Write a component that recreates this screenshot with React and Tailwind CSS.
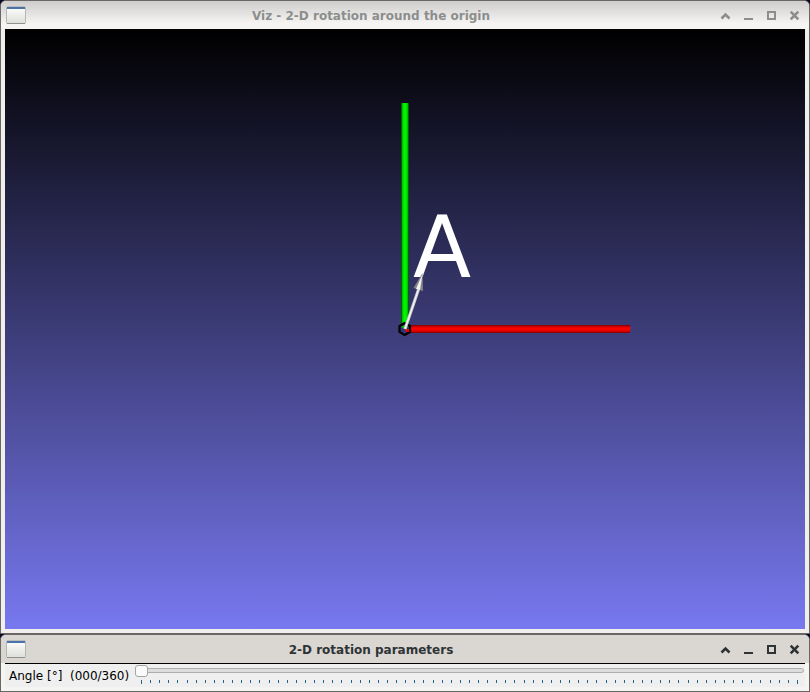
import React, { useState } from 'react';

function WindowIcon() {
  return (
    <svg className="h-5 w-5 shrink-0" viewBox="0 0 20 20" aria-hidden="true">
      <defs>
        <linearGradient id="pane" x1="0" y1="0" x2="0" y2="1">
          <stop offset="0" stopColor="#ffffff" />
          <stop offset="1" stopColor="#dcdfd9" />
        </linearGradient>
      </defs>
      <rect x="0.5" y="1.5" width="19" height="17" rx="1" fill="url(#pane)" stroke="#b4b7b2" />
      <rect x="1" y="1" width="18" height="1" fill="#b9bdc0" />
      <rect x="1" y="2" width="18" height="2" fill="#4c73a8" />
      <rect x="1" y="18" width="18" height="1" fill="#8d908c" />
    </svg>
  );
}

const glyphs = {
  Shade: <path d="M1.5 9.5 L5.5 5.5 L9.5 9.5" strokeWidth="2.6" />,
  Minimize: <path d="M1 10 H10" />,
  Maximize: <rect x="2" y="3" width="7" height="7" />,
  Close: <path d="M1.7 2.7 L9.3 10.3 M9.3 2.7 L1.7 10.3" strokeWidth="2.6" />,
};

function TitleBar({ title, active }) {
  return (
    <header
      className={
        'flex h-7 items-center pr-[9px] pl-[5px] ' +
        (active ? 'bg-[#dad6d2] text-[#2e3436]' : 'bg-linear-to-b from-[#cfcdcb] to-[#f5f4f2] to-80% text-[#8b8e8d]')
      }
    >
      <WindowIcon />
      <h1 className="flex-1 pt-0.5 pr-1 text-center text-xs font-bold">{title}</h1>
      <div className="flex gap-3">
        {Object.entries(glyphs).map(([name, shape]) => (
          <button key={name} type="button" aria-label={name} className="h-3 w-[11px]">
            <svg className="h-3 w-[11px]" viewBox="0 0 11 12" fill="none" stroke="currentColor" strokeWidth="2">
              {shape}
            </svg>
          </button>
        ))}
      </div>
    </header>
  );
}

function Scene() {
  return (
    <svg className="block w-full" viewBox="0 0 800 600" role="img" aria-label="Vector A in the coordinate frame">
      <defs>
        <linearGradient id="sky" x1="0" y1="0" x2="0" y2="1">
          <stop offset="0" stopColor="#000000" />
          <stop offset="1" stopColor="#7878f0" />
        </linearGradient>
        <linearGradient id="yAxis" x1="0" y1="0" x2="1" y2="0">
          <stop offset="0" stopColor="#003800" />
          <stop offset="0.22" stopColor="#00d800" />
          <stop offset="0.5" stopColor="#00ff00" />
          <stop offset="0.78" stopColor="#00d800" />
          <stop offset="1" stopColor="#003800" />
        </linearGradient>
        <linearGradient id="xAxis" x1="0" y1="0" x2="0" y2="1">
          <stop offset="0" stopColor="#780000" />
          <stop offset="0.25" stopColor="#e00000" />
          <stop offset="0.5" stopColor="#ff0000" />
          <stop offset="0.75" stopColor="#e00000" />
          <stop offset="1" stopColor="#780000" />
        </linearGradient>
      </defs>
      <rect width="800" height="600" fill="url(#sky)" />
      <rect x="396" y="74" width="8" height="222" rx="1" fill="url(#yAxis)" />
      <rect x="404" y="296" width="221" height="8" fill="url(#xAxis)" />
      <rect x="625" y="298" width="1" height="3" fill="#a02040" />
      <path d="M399.5 294 L405 297 V303 L399.5 306 L394.5 303 V297 Z" fill="#34347a" stroke="#000" strokeWidth="2.2" />
      <path d="M396 298 L400 296 L403 298 L400 300 Z" fill="#0c0" />
      <path d="M400 300 H404 V303 H401 Z" fill="#e00" />
      <text x="408" y="248" fill="#fff" fontSize="85" fontFamily="DejaVu Sans, sans-serif">
        A
      </text>
      <path d="M400 300 L414 259" stroke="#ccc" strokeWidth="3" />
      <path d="M400 300 L414 259" stroke="#fff" strokeWidth="1" />
      <path d="M417.5 244 L408.5 259 L418 262 Z" fill="#858585" />
      <path d="M417.5 245 L411 260 L415 261 Z" fill="#f2f2f2" />
    </svg>
  );
}

const ticks = Array.from({ length: 73 }, (_, i) => i * 5);

export default function App() {
  const [angle, setAngle] = useState(0);
  return (
    <main className="min-h-screen bg-[#0a0828] font-['DejaVu_Sans',sans-serif]">
      <section className="overflow-hidden rounded-t-md border border-[#696664] bg-[#f1efed]">
        <TitleBar title="Viz - 2-D rotation around the origin" />
        <div className="px-1 pb-1">
          <Scene />
        </div>
      </section>
      <section className="overflow-hidden rounded-t-md border border-[#696664] bg-[#f5f4f3]">
        <TitleBar title="2-D rotation parameters" active />
        <div className="px-1 pb-1">
          <div className="flex h-6 border-t border-black bg-[#efefef] pr-px pl-1">
            <label htmlFor="angle" className="w-[126px] shrink-0 text-xs leading-6 whitespace-pre">
              {'Angle [°]  (' + String(angle).padStart(3, '0') + '/360)'}
            </label>
            <div className="min-w-0 flex-1">
              <input
                id="angle"
                type="range"
                min="0"
                max="360"
                value={angle}
                onChange={(e) => setAngle(Number(e.target.value))}
                className="block h-3 w-full appearance-none bg-transparent [&::-webkit-slider-runnable-track]:h-[5px] [&::-webkit-slider-runnable-track]:rounded-sm [&::-webkit-slider-runnable-track]:border [&::-webkit-slider-runnable-track]:border-[#adadad] [&::-webkit-slider-runnable-track]:bg-[#dcdcdc] [&::-webkit-slider-thumb]:-mt-1 [&::-webkit-slider-thumb]:-ml-px [&::-webkit-slider-thumb]:h-3 [&::-webkit-slider-thumb]:w-[13px] [&::-webkit-slider-thumb]:appearance-none [&::-webkit-slider-thumb]:rounded-[3px] [&::-webkit-slider-thumb]:border [&::-webkit-slider-thumb]:border-[#a5a5a5] [&::-webkit-slider-thumb]:bg-[#fafafa]"
              />
              <div className="flex justify-between px-1.5 pt-1">
                {ticks.map((t) => (
                  <span key={t} className={t % 360 === 0 ? 'h-1 w-px bg-[#20648c]' : 'h-[3px] w-px bg-[#20648c]'} />
                ))}
              </div>
            </div>
          </div>
        </div>
      </section>
    </main>
  );
}
